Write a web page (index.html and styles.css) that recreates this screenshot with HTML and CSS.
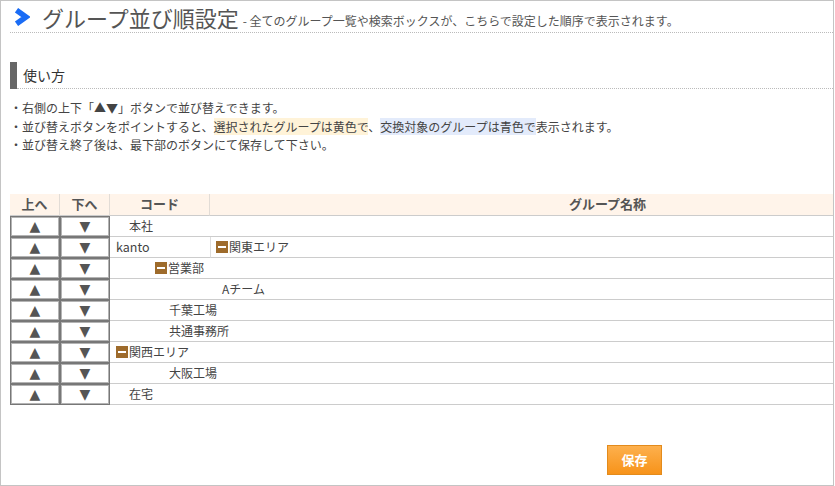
FILE: index.html
```html
<!DOCTYPE html>
<html>
<head>
    <meta charset="utf-8">
    <link rel="stylesheet" href="styles.css">
</head>
<body>
  <div class="frame">
    <div class="page-title">
      <svg class="chevron" width="17" height="18" viewBox="0 0 17 18"><path d="M3.5 2.2 L13 9 L3.5 15.8" fill="none" stroke="#1a6cf5" stroke-width="5.5" stroke-linejoin="miter" stroke-miterlimit="2"/></svg>
      <h1>グループ並び順設定</h1>
      <span class="sub">- 全てのグループ一覧や検索ボックスが、こちらで設定した順序で表示されます。</span>
    </div>

    <div class="howto">
      <div class="bar"></div>
      <h2>使い方</h2>
    </div>
    <ul class="notes">
      <li>・右側の上下「▲▼」ボタンで並び替えできます。</li>
      <li>・並び替えボタンをポイントすると、<span class="hl-yellow">選択されたグループは黄色で</span>、<span class="hl-blue">交換対象のグループは青色で</span>表示されます。</li>
      <li>・並び替え終了後は、最下部のボタンにて保存して下さい。</li>
    </ul>

    <table class="groups">
      <thead>
        <tr>
          <th class="c-up">上へ</th>
          <th class="c-down">下へ</th>
          <th class="c-code">コード</th>
          <th class="c-name">グループ名称</th>
        </tr>
      </thead>
      <tbody>
        <tr>
          <td class="btn"><div class="b">▲</div></td><td class="btn"><div class="b">▼</div></td>
          <td class="name" colspan="2"><div class="ind" style="padding-left:19px">本社</div></td>
        </tr>
        <tr>
          <td class="btn"><div class="b">▲</div></td><td class="btn"><div class="b">▼</div></td>
          <td class="code">kanto</td>
          <td class="name split"><div class="ind" style="padding-left:5px"><svg class="minus" width="12" height="12" viewBox="0 0 12 12"><rect width="12" height="12" fill="#9e6b2b"/><rect x="2" y="5" width="8" height="2" fill="#fff"/></svg>関東エリア</div></td>
        </tr>
        <tr>
          <td class="btn"><div class="b">▲</div></td><td class="btn"><div class="b">▼</div></td>
          <td class="name" colspan="2"><div class="ind" style="padding-left:45px"><svg class="minus" width="12" height="12" viewBox="0 0 12 12"><rect width="12" height="12" fill="#9e6b2b"/><rect x="2" y="5" width="8" height="2" fill="#fff"/></svg>営業部</div></td>
        </tr>
        <tr>
          <td class="btn"><div class="b">▲</div></td><td class="btn"><div class="b">▼</div></td>
          <td class="name" colspan="2"><div class="ind" style="padding-left:112px">Aチーム</div></td>
        </tr>
        <tr>
          <td class="btn"><div class="b">▲</div></td><td class="btn"><div class="b">▼</div></td>
          <td class="name" colspan="2"><div class="ind" style="padding-left:59px">千葉工場</div></td>
        </tr>
        <tr>
          <td class="btn"><div class="b">▲</div></td><td class="btn"><div class="b">▼</div></td>
          <td class="name" colspan="2"><div class="ind" style="padding-left:59px">共通事務所</div></td>
        </tr>
        <tr>
          <td class="btn"><div class="b">▲</div></td><td class="btn"><div class="b">▼</div></td>
          <td class="name" colspan="2"><div class="ind" style="padding-left:6px"><svg class="minus" width="12" height="12" viewBox="0 0 12 12"><rect width="12" height="12" fill="#9e6b2b"/><rect x="2" y="5" width="8" height="2" fill="#fff"/></svg>関西エリア</div></td>
        </tr>
        <tr>
          <td class="btn"><div class="b">▲</div></td><td class="btn"><div class="b">▼</div></td>
          <td class="name" colspan="2"><div class="ind" style="padding-left:59px">大阪工場</div></td>
        </tr>
        <tr>
          <td class="btn"><div class="b">▲</div></td><td class="btn"><div class="b">▼</div></td>
          <td class="name" colspan="2"><div class="ind" style="padding-left:19px">在宅</div></td>
        </tr>
      </tbody>
    </table>

    <div class="actions">
      <button class="save">保存</button>
    </div>
  </div>
</body>
</html>
```

FILE: styles.css
```css
* {
margin: 0;
padding: 0;
box-sizing: border-box;
font-family: "Noto Sans CJK JP", "Noto Sans", sans-serif;
}

body {
background: #fff;
color: #444;
}

.frame {
width: 834px;
height: 486px;
border: 1px solid #c4c4c4;
padding-left: 9px;
}

.page-title {
display: flex;
align-items: center;
height: 32px;
border-bottom: 1px dotted #bbb;
padding-top: 1px;
}

.chevron {
margin-left: 3px;
margin-right: 12px;
}

.page-title h1 {
font-size: 22px;
font-weight: normal;
color: #555;
line-height: 28px;
}

.page-title .sub {
font-size: 12px;
color: #555;
margin-left: 4px;
margin-top: 6px;
}

.howto {
display: flex;
margin-top: 29px;
height: 27px;
}

.howto .bar {
width: 7px;
background: #666;
}

.howto h2 {
flex: 1;
font-size: 14px;
font-weight: normal;
color: #333;
line-height: 26px;
padding-left: 6px;
border-bottom: 1px dotted #bbb;
}

.notes {
list-style: none;
margin-top: 10px;
font-size: 12px;
line-height: 18.5px;
color: #444;
}

.hl-yellow {
background: #fff3d8;
}

.hl-blue {
background: #e3ebfb;
}

.groups {
margin-top: 39px;
width: 100%;
border-collapse: separate;
border-spacing: 0;
font-size: 12px;
}

.groups th {
height: 22px;
background: #fff4ea;
color: #555;
font-size: 13px;
font-weight: bold;
border-bottom: 1px solid #ccc;
border-right: 1px solid #e2dcd6;
line-height: 20px;
}

.groups th.c-name {
border-right: none;
padding-left: 172px;
}

.c-up, .c-down {
width: 50px;
}

.c-code {
width: 100px;
}

.groups tbody tr {
height: 21px;
}

.groups td {
padding: 0;
vertical-align: top;
}

.groups td.btn {
width: 50px;
}

.b {
height: 21px;
border: 1px solid #777;
box-shadow: inset 0 0 0 1px #b4b4b4;
display: flex;
align-items: center;
justify-content: center;
color: #555;
font-family: "DejaVu Sans", sans-serif;
font-size: 14px;
}

.groups td.name, .groups td.code {
border-bottom: 1px solid #ccc;
color: #444;
white-space: nowrap;
}

.groups td.code {
padding-left: 6px;
font-size: 12.5px;
line-height: 20px;
height: 21px;
}

.groups td.split {
border-left: 1px solid #ddd;
}

.ind {
display: flex;
align-items: center;
height: 20px;
}

.minus {
margin-right: 1px;
}

.actions {
margin-top: 40px;
padding-left: 597px;
}

.save {
width: 55px;
height: 30px;
border: 1px solid #e38b1c;
background: linear-gradient(#fdb04d, #f7931a);
color: #fff;
font-size: 13px;
font-weight: bold;
}
```
